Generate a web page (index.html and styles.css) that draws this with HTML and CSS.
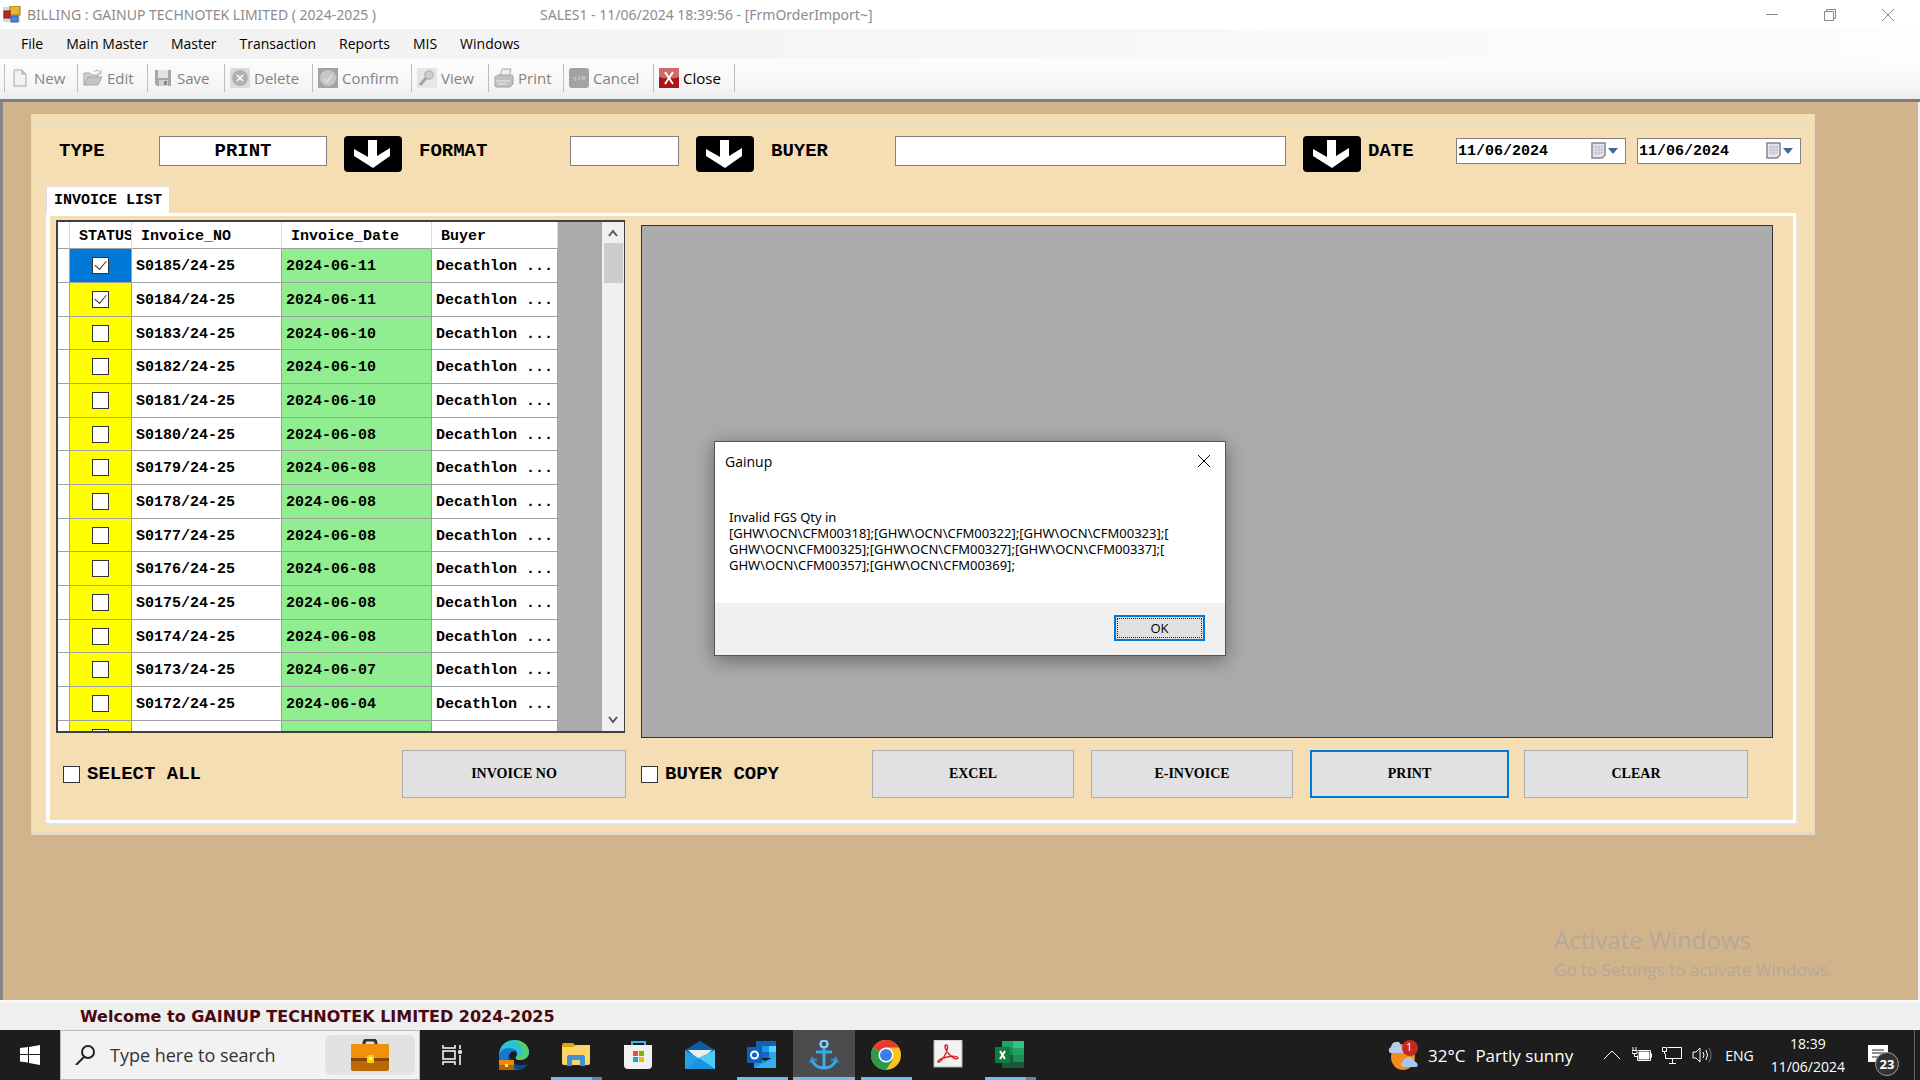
FILE: index.html
```html
<!DOCTYPE html>
<html lang="en">
  <head>
    <meta charset="UTF-8" />
    <meta name="viewport" content="width=device-width, initial-scale=1.0" />
    <title>BILLING : GAINUP TECHNOTEK LIMITED</title>
    <link rel="stylesheet" href="styles.css">
  </head>
  <body>
    <header class="titlebar">
      <svg class="app-icon" viewBox="0 0 18 18">
        <rect x="0" y="1" width="17" height="15" fill="#d8d8d8" />
        <rect x="7" y="0" width="10" height="9" fill="#e9b52b" stroke="#9a7420" />
        <rect x="1" y="5" width="6" height="7" fill="#c62a1c" stroke="#7c1a12" />
        <rect x="8" y="10" width="7" height="6" fill="#4d86dc" stroke="#2e5aa8" />
      </svg>
      <span class="app-name">BILLING : GAINUP TECHNOTEK LIMITED ( 2024-2025 )</span>
      <span class="app-session">SALES1 - 11/06/2024 18:39:56 - [FrmOrderImport~]</span>
      <div class="window-controls">
        <button type="button" aria-label="Minimize"><svg viewBox="0 0 12 12"><path d="M0 5.500h12" /></svg></button>
        <button type="button" aria-label="Restore"><svg viewBox="0 0 12 12"><path d="M.5 2.500h9v9h-9zM2.500 2.500v-2h9v9h-2" /></svg></button>
        <button type="button" aria-label="Close window"><svg viewBox="0 0 12 12"><path d="M0 0l12 12M12 0L0 12" /></svg></button>
      </div>
    </header>

    <nav class="menubar">
      <button type="button">File</button>
      <button type="button">Main Master</button>
      <button type="button">Master</button>
      <button type="button">Transaction</button>
      <button type="button">Reports</button>
      <button type="button">MIS</button>
      <button type="button">Windows</button>
    </nav>

    <div class="toolbar">
      <button type="button" class="tool-new" disabled>
        <svg viewBox="0 0 20 20"><path d="M4 2h8l4 4v12H4z" fill="#f2f2f2" stroke="#a8a8a8" /><path d="M12 2v4h4" fill="#ccc" stroke="#a8a8a8" /></svg>New
      </button>
      <button type="button" class="tool-edit" disabled>
        <svg viewBox="0 0 20 20"><path d="M1 17V5h6l1 2h7v3" fill="#d2d2d2" stroke="#a8a8a8" /><path d="M1 17l4-8h14l-4 8z" fill="#c4c4c4" stroke="#a8a8a8" /><path d="M11 4q4-4 6 1M18 2v4h-4" fill="none" stroke="#b0b0b0" /></svg>Edit
      </button>
      <button type="button" class="tool-save" disabled>
        <svg viewBox="0 0 20 20"><path d="M2 2h16v16H4l-2-2z" fill="#a6a6a6" /><rect x="5" y="2" width="10" height="8" fill="#e2e2e2" /><rect x="6" y="12" width="9" height="6" fill="#d0d0d0" /><rect x="11" y="13" width="3" height="4" fill="#888" /></svg>Save
      </button>
      <button type="button" class="tool-delete" disabled>
        <svg viewBox="0 0 20 20"><rect width="20" height="20" rx="2" fill="#dadada" /><circle cx="10" cy="10" r="8" fill="#b0b0b0" /><path d="M7 7l6 6M13 7l-6 6" stroke="#fff" stroke-width="1.500" /></svg>Delete
      </button>
      <button type="button" class="tool-confirm" disabled>
        <svg viewBox="0 0 20 20"><rect width="20" height="20" fill="#a3a3a3" /><circle cx="10" cy="10" r="8" fill="#c6c6c6" /><path d="M6 11l3 3 5-7" fill="none" stroke="#dedede" stroke-width="1.500" /></svg>Confirm
      </button>
      <button type="button" class="tool-view" disabled>
        <svg viewBox="0 0 20 20"><rect width="20" height="20" fill="#e6e6e6" /><circle cx="12" cy="7" r="4" fill="#d0d0d0" stroke="#bdbdbd" stroke-width="2" /><path d="M9 10l-6 7" stroke="#a4a4a4" stroke-width="3" /></svg>View
      </button>
      <button type="button" class="tool-print" disabled>
        <svg viewBox="0 0 20 20"><path d="M6 9l2-8h9l-2 8z" fill="#efefef" stroke="#a8a8a8" /><path d="M1 9l3-2h14l1 2v7l-3 3H2l-1-1z" fill="#c0c0c0" stroke="#a2a2a2" /><path d="M2 13h14M4 16h9" stroke="#eee" /></svg>Print
      </button>
      <button type="button" class="tool-cancel" disabled>
        <svg viewBox="0 0 20 20"><rect width="20" height="20" rx="3" fill="#a2a2a2" /><path d="M4 10h3M5 12h3M10 8v4M13 9h3v2h-3z" stroke="#d4d4d4" fill="none" /></svg>Cancel
      </button>
      <button type="button" class="tool-close">
        <svg viewBox="0 0 20 20"><rect width="20" height="20" fill="#a81616" /><path d="M0 0h20v9q-10 3-20 0z" fill="#cf6a6a" /><path d="M6 4l8 12M14 4L6 16" stroke="#fff" stroke-width="2" /></svg>Close
      </button>
    </div>

    <main class="workspace">
      <section class="order-panel">
        <form class="filters">
          <label class="label-type" for="type">TYPE</label>
          <input class="input-type" id="type" type="text" value="PRINT">
          <button type="button" class="drop-btn" aria-label="Pick type"><svg viewBox="0 0 58 36"><path d="M24 4h9v16l13-8v8L29 32 10 20v-7l14 8z" /></svg></button>
          <label class="label-format" for="format">FORMAT</label>
          <input class="input-format" id="format" type="text">
          <button type="button" class="drop-btn" aria-label="Pick format"><svg viewBox="0 0 58 36"><path d="M24 4h9v16l13-8v8L29 32 10 20v-7l14 8z" /></svg></button>
          <label class="label-buyer" for="buyer">BUYER</label>
          <input class="input-buyer" id="buyer" type="text">
          <button type="button" class="drop-btn" aria-label="Pick buyer"><svg viewBox="0 0 58 36"><path d="M24 4h9v16l13-8v8L29 32 10 20v-7l14 8z" /></svg></button>
          <label class="label-date" for="date-from">DATE</label>
          <div class="date-box">
            <input id="date-from" type="text" value="11/06/2024">
            <button type="button" aria-label="Open calendar"><svg viewBox="0 0 28 18"><path d="M1 1h13v12l-3 3H1z" fill="#e4e7ec" stroke="#8d8580" stroke-width="1.500" /><path d="M3 5h9M3 8h9M3 11h9M5 3v10M8 3v10M11 3v8" stroke="#b9c3d4" /><path d="M17 6h10l-5 6z" fill="#44649c" /></svg></button>
          </div>
          <div class="date-box">
            <input id="date-to" type="text" value="11/06/2024" aria-label="Date to">
            <button type="button" aria-label="Open calendar"><svg viewBox="0 0 28 18"><path d="M1 1h13v12l-3 3H1z" fill="#e4e7ec" stroke="#8d8580" stroke-width="1.500" /><path d="M3 5h9M3 8h9M3 11h9M5 3v10M8 3v10M11 3v8" stroke="#b9c3d4" /><path d="M17 6h10l-5 6z" fill="#44649c" /></svg></button>
          </div>
        </form>

        <button type="button" class="tab">INVOICE LIST</button>
        <div class="tab-page">
          <div class="grids">
            <div class="invoice-grid">
              <table>
                <thead>
                  <tr><th class="col-head"></th><th class="col-status">STATUS</th><th class="col-no">Invoice_NO</th><th class="col-date">Invoice_Date</th><th class="col-buyer">Buyer</th></tr>
                </thead>
                <tbody>
                  <tr class="current"><td></td><td><input type="checkbox" aria-label="S0185" checked></td><td>S0185/24-25</td><td>2024-06-11</td><td>Decathlon ...</td></tr>
                  <tr><td></td><td><input type="checkbox" aria-label="S0184" checked></td><td>S0184/24-25</td><td>2024-06-11</td><td>Decathlon ...</td></tr>
                  <tr><td></td><td><input type="checkbox" aria-label="S0183"></td><td>S0183/24-25</td><td>2024-06-10</td><td>Decathlon ...</td></tr>
                  <tr><td></td><td><input type="checkbox" aria-label="S0182"></td><td>S0182/24-25</td><td>2024-06-10</td><td>Decathlon ...</td></tr>
                  <tr><td></td><td><input type="checkbox" aria-label="S0181"></td><td>S0181/24-25</td><td>2024-06-10</td><td>Decathlon ...</td></tr>
                  <tr><td></td><td><input type="checkbox" aria-label="S0180"></td><td>S0180/24-25</td><td>2024-06-08</td><td>Decathlon ...</td></tr>
                  <tr><td></td><td><input type="checkbox" aria-label="S0179"></td><td>S0179/24-25</td><td>2024-06-08</td><td>Decathlon ...</td></tr>
                  <tr><td></td><td><input type="checkbox" aria-label="S0178"></td><td>S0178/24-25</td><td>2024-06-08</td><td>Decathlon ...</td></tr>
                  <tr><td></td><td><input type="checkbox" aria-label="S0177"></td><td>S0177/24-25</td><td>2024-06-08</td><td>Decathlon ...</td></tr>
                  <tr><td></td><td><input type="checkbox" aria-label="S0176"></td><td>S0176/24-25</td><td>2024-06-08</td><td>Decathlon ...</td></tr>
                  <tr><td></td><td><input type="checkbox" aria-label="S0175"></td><td>S0175/24-25</td><td>2024-06-08</td><td>Decathlon ...</td></tr>
                  <tr><td></td><td><input type="checkbox" aria-label="S0174"></td><td>S0174/24-25</td><td>2024-06-08</td><td>Decathlon ...</td></tr>
                  <tr><td></td><td><input type="checkbox" aria-label="S0173"></td><td>S0173/24-25</td><td>2024-06-07</td><td>Decathlon ...</td></tr>
                  <tr><td></td><td><input type="checkbox" aria-label="S0172"></td><td>S0172/24-25</td><td>2024-06-04</td><td>Decathlon ...</td></tr>
                  <tr><td></td><td><input type="checkbox" aria-label="Next invoice"></td><td></td><td></td><td></td></tr>
                </tbody>
              </table>
              <div class="scrollbar">
                <svg viewBox="0 0 12 12"><path d="M2 9l4-5 4 5" /></svg>
                <div class="scroll-thumb"></div>
                <svg viewBox="0 0 12 12"><path d="M2 3l4 5 4-5" /></svg>
              </div>
            </div>
            <div class="detail-grid"></div>
          </div>

          <div class="actions">
            <label class="check-select"><input type="checkbox">SELECT ALL</label>
            <button type="button" class="btn-invoice">INVOICE NO</button>
            <label class="check-copy"><input type="checkbox">BUYER COPY</label>
            <button type="button" class="btn-excel">EXCEL</button>
            <button type="button" class="btn-einvoice">E-INVOICE</button>
            <button type="button" class="btn-print">PRINT</button>
            <button type="button" class="btn-clear">CLEAR</button>
          </div>
        </div>
      </section>

      <div class="watermark">
        <p class="watermark-title">Activate Windows</p>
        <p class="watermark-text">Go to Settings to activate Windows.</p>
      </div>
    </main>

    <div class="statusbar">Welcome to GAINUP TECHNOTEK LIMITED 2024-2025</div>

    <footer class="taskbar">
      <button type="button" class="start" aria-label="Start">
        <svg viewBox="0 0 20 20"><path d="M0 3l8-1v7H0zM9 2l11-2v9H9zM0 10h8v7.500L0 16.500zM9 10h11v10L9 18z" fill="#fff" /></svg>
      </button>
      <div class="search">
        <svg class="search-icon" viewBox="0 0 20 20"><circle cx="13" cy="7" r="6" /><path d="M9 12l-8 8" /></svg>
        <input type="text" aria-label="Search" placeholder="Type here to search">
        <div class="search-tile">
          <svg viewBox="0 0 38 32">
            <path d="M13 6V4q0-3 3-3h6q3 0 3 3v2" fill="none" stroke="#333" stroke-width="3" />
            <rect y="5" width="38" height="27" rx="2" fill="#b86a06" /><path d="M0 19V7q0-2 2-2h34q2 0 2 2v12z" fill="#f09208" /><path d="M0 19h38v3H0z" fill="#854400" />
            <rect x="16" y="16" width="7" height="8" rx="1" fill="#f7cf13" /><rect x="18" y="18" width="3" height="3" fill="#fff29a" />
          </svg>
        </div>
      </div>
      <div class="task-icons">
        <button type="button" class="task" aria-label="Task view">
          <svg class="task-view" viewBox="0 0 20 20" fill="none" stroke="#fff" stroke-width="1.500"><path d="M1 0v3h12V0M1 20v-3h12v3M1 6h12v8H1zM18 0v4M18 10v10" /><rect x="17" y="6" width="2" height="2" /></svg>
        </button>
        <button type="button" class="task" aria-label="Edge">
          <svg viewBox="0 0 30 30">
            <path d="M0 14C1 5 7 0 15 0c9 0 15 6 15 12 0 5-4 8-9 8-3 0-5-1-4-3 2-3 1-8-5-8C6 9 1 12 0 17z" fill="#2cc3d0" /><path d="M15 0c9 0 15 6 15 12 0 5-4 8-9 8-3 0-5-1-4-3 3-1 7-1 7-5 0-5-4-9-9-12z" fill="#52cf6a" />
            <path d="M0 15c1-4 5-7 10-7 3 0 6 1 7 3-6 0-8 4-7 8 1 5 6 8 11 8 2 0 5-1 7-2-3 3-7 5-12 5C6 30-1 24 0 15z" fill="#1676d0" /><path d="M9 18c0 7 5 12 11 12 4-1 7-3 8-6-7 3-15 1-17-7z" fill="#0b4a94" />
            <rect y="20" width="15" height="10" fill="#b56200" /><path d="M0 20h15v5H0z" fill="#ea8a0c" /><rect x="6" y="24" width="3" height="3" fill="#ffe34d" />
          </svg>
        </button>
        <button type="button" class="task open stacked" aria-label="File Explorer">
          <svg viewBox="0 0 30 30"><path d="M1 5q0-2 2-2h9l3 3v5H1z" fill="#e0a30c" /><path d="M1 7h11l3-2h14v18q0 2-2 2H3q-2 0-2-2z" fill="#ffd467" /><path d="M6 26V17q0-2 2-2h14q2 0 2 2v9h-5v-6h-8v6z" fill="#3b92d8" /></svg>
        </button>
        <button type="button" class="task" aria-label="Store">
          <svg viewBox="0 0 30 30"><path d="M9 7V2h13v5" fill="none" stroke="#35b6f2" stroke-width="2" /><path d="M1 5h28v20q0 4-4 4H5q-4 0-4-4z" fill="#f1f1f1" /><path d="M10 11h5v5h-5z" fill="#f0502c" /><path d="M16 11h5v5h-5z" fill="#7db700" /><path d="M10 17h5v5h-5z" fill="#1ba1e8" /><path d="M16 17h5v5h-5z" fill="#fcb400" /></svg>
        </button>
        <button type="button" class="task" aria-label="Mail">
          <svg viewBox="0 0 30 30"><path d="M0 10L15 1l15 9v10H0z" fill="#0c5ba6" /><path d="M3 10h24L15 21z" fill="#eee" /><path d="M0 10l15 9 15-9v19H0z" fill="#25a1e8" /><path d="M30 10v19L13 18z" fill="#4acbf8" /><path d="M0 29l14-11 16 11z" fill="#1d93dc" /></svg>
        </button>
        <button type="button" class="task open" aria-label="Outlook">
          <svg viewBox="0 0 30 30"><path d="M9 1h20v15H9z" fill="#0f62b5" /><path d="M15 6h7v6h-7z" fill="#2394e0" /><path d="M22 6h7v6h-7z" fill="#50d9ff" /><path d="M15 12h7v6h-7z" fill="#0f6cc4" /><path d="M22 12h7v6h-7z" fill="#28a8ea" /><path d="M7 15l11 6 11-5v12H7z" fill="#1893e0" /><path d="M7 28l22-12v12z" fill="#33afee" /><rect y="7" width="15" height="16" rx="1" fill="#0d5fc0" /><circle cx="7.500" cy="15" r="3.500" fill="none" stroke="#fff" stroke-width="2" /></svg>
        </button>
        <button type="button" class="task open active" aria-label="Billing">
          <svg viewBox="0 0 30 30" fill="none" stroke="#3ea9ec" stroke-width="3"><circle cx="15" cy="4" r="3.500" stroke="#7fd0fa" stroke-width="2.500" /><path d="M15 8v20M7 12h16" /><path d="M3 20q3 8 12 8t12-8" /><path d="M1 23l2-5 5 3M29 23l-2-5-5 3" stroke-width="2" stroke="#2d8fe0" /></svg>
        </button>
        <button type="button" class="task open" aria-label="Chrome">
          <svg viewBox="0 0 30 30"><circle cx="15" cy="15" r="15" fill="#fcc31e" /><path d="M15 15L2 7.500A15 15 0 0 1 28 7.500H15z" fill="#e33b2e" /><path d="M2 7.500a15 15 0 0 0 13 22.500l7-11-7-4z" fill="#2c9a48" /><circle cx="15" cy="15" r="7.500" fill="#fff" /><circle cx="15" cy="15" r="6" fill="#3b7ded" /></svg>
        </button>
        <button type="button" class="task" aria-label="Acrobat">
          <svg viewBox="0 0 30 30"><rect x="1" width="28" height="27" fill="#f2f2f2" stroke="#b5b5b5" /><path d="M5 22c3 1 6-5 8-9 2-5 2-8 0-8s-1 5 3 9c3 4 8 6 9 4 0-2-6-2-11-1-5 1-9 3-9 5z" fill="none" stroke="#e0242b" stroke-width="1.500" /></svg>
        </button>
        <button type="button" class="task open stacked" aria-label="Excel">
          <svg viewBox="0 0 30 30"><rect x="7" y="1" width="22" height="27" rx="1" fill="#1f8a52" /><path d="M18 1h11v7H18z" fill="#33c481" /><path d="M7 1h11v7H7z" fill="#21a366" /><path d="M18 8h11v7H18z" fill="#21a366" /><path d="M7 15h11v7H7zM7 22h22v6H7z" fill="#185c37" /><rect y="7" width="15" height="16" rx="1" fill="#107c41" /><path d="M5 11l5 8M10 11l-5 8" stroke="#fff" stroke-width="2" /></svg>
        </button>
      </div>
      <div class="tray">
        <div class="weather">
          <svg viewBox="0 0 30 30"><ellipse cx="15" cy="17" rx="12" ry="13" fill="#f58a1d" /><path d="M2 13q-3-4 1-6 1-5 5-5 4-1 5 4 4 1 2 7z" fill="#b5cdf3" /><path d="M15 27q-4-3 0-6 2-4 6-4 4 0 5 4 5 2 3 6z" fill="#a8c5f2" /><circle cx="22" cy="8" r="8" fill="#c42b1c" /></svg>
          <span class="weather-badge">1</span>
          <span>32°C</span><span>Partly sunny</span>
        </div>
        <svg class="tray-icon" viewBox="0 0 20 20"><path d="M2 14l8-8 8 8" /></svg>
        <svg class="tray-icon" viewBox="0 0 20 20"><path d="M6 5.500h12.500v10H5.500v-5M19.500 8.500v4M0 5.500h5v3H0zM1 2v3M4 2v3M2.500 8v3.500h3" /><path d="M7 7h10v7H7z" fill="#fff" /></svg>
        <svg class="tray-icon" viewBox="0 0 20 20"><path d="M5.500 2.500h14v11h-16V9M10.500 14v4M7 18.500h7M.5 2.500h4v4h-4zM2.500 6v3" /></svg>
        <svg class="tray-icon" viewBox="0 0 20 20"><path d="M1 7h3l4-4v14l-4-4H1zM11 7q2 3 0 6M14 5q3 5 0 10" /><path d="M17 3q4 7 0 14" stroke="#777" /></svg>
        <span class="lang">ENG</span>
        <div class="clock"><span>18:39</span><span>11/06/2024</span></div>
        <div class="notify">
          <svg viewBox="0 0 20 20"><path d="M0 0h20v17h-7l-3 3-3-3H0z" fill="#fff" /><path d="M4 5h12M4 8h12M4 12h8" stroke="#222" /></svg>
          <span class="notify-count">23</span>
        </div>
      </div>
    </footer>

    <div class="dialog" role="dialog" aria-labelledby="dialog-title">
      <div class="dialog-head">
        <span id="dialog-title">Gainup</span>
        <button type="button" class="dialog-close" aria-label="Close dialog"><svg viewBox="0 0 12 12"><path d="M0 0l12 12M12 0L0 12" /></svg></button>
      </div>
      <p class="dialog-text">Invalid FGS Qty in<br>[GHW\OCN\CFM00318];[GHW\OCN\CFM00322];[GHW\OCN\CFM00323];[<br>GHW\OCN\CFM00325];[GHW\OCN\CFM00327];[GHW\OCN\CFM00337];[<br>GHW\OCN\CFM00357];[GHW\OCN\CFM00369];</p>
      <div class="dialog-foot">
        <button type="button" class="dialog-ok"><span>OK</span></button>
      </div>
    </div>
  </body>
</html>
```

FILE: styles.css
```css
* {
  box-sizing: border-box;
}

body {
  margin: 0;
  min-height: 100vh;
  display: flex;
  flex-direction: column;
  font-family: "Open Sans", "Noto Sans", sans-serif;
  font-size: 14px;
  color: #000;
}

button,
input {
  font: inherit;
  color: inherit;
  margin: 0;
}

button {
  padding: 0;
  border: none;
  background: none;
}

svg {
  display: block;
  flex: none;
}

/* title bar */
.titlebar {
  display: flex;
  align-items: center;
  height: 29px;
  padding-left: 3px;
  padding-right: 3px;
  background: #fff;
  color: #8c8c8c;
  font-family: "Noto Sans", sans-serif;
}

.app-icon {
  width: 18px;
  height: 18px;
}

.app-name {
  width: 513px;
  margin-left: 6px;
  white-space: nowrap;
}

.window-controls {
  display: flex;
  margin-left: auto;
}

.window-controls button {
  width: 58px;
  height: 28px;
  display: flex;
  align-items: center;
  justify-content: center;
}

.window-controls svg {
  width: 12px;
  height: 12px;
  fill: none;
  stroke: #888;
}

/* menu and toolbar */
.menubar {
  display: flex;
  gap: 23px;
  height: 30px;
  padding-left: 21px;
  padding-bottom: 2px;
  background: linear-gradient(to right, #f0f0f0, #fdfdfd);
}

.toolbar {
  display: flex;
  align-items: center;
  height: 43px;
  padding-left: 4px;
  padding-bottom: 2px;
  background: linear-gradient(#fdfdfd, #f5f5f5 70%, #ebebeb);
  border-bottom: 3px solid #7d7d7d;
  font-size: 15px;
}

.toolbar button {
  display: flex;
  align-items: center;
  gap: 4px;
  height: 28px;
  padding-left: 5px;
  border-left: 1px solid #bdbdbd;
  white-space: nowrap;
}

.toolbar button:disabled {
  color: #838383;
}

.toolbar svg {
  width: 20px;
  height: 20px;
}

.tool-new {
  width: 73px;
}

.tool-edit {
  width: 70px;
}

.tool-save,
.tool-view {
  width: 77px;
}

.tool-print {
  width: 75px;
}

.tool-delete {
  width: 88px;
}

.tool-confirm {
  width: 99px;
}

.tool-cancel {
  width: 90px;
}

.toolbar .tool-close {
  width: 82px;
  border-right: 1px solid #bdbdbd;
}

/* workspace */
.workspace {
  flex: 1;
  display: flex;
  flex-direction: column;
  padding: 12px 103px 17px 28px;
  background: #d2b48c;
  border-left: 3px solid #858585;
  border-right: 2px solid #f2f2f2;
}

.order-panel {
  padding: 8px 0 0;
  background: #f5deb3;
  border: 1px solid #e6dac4;
  border-bottom-width: 3px;
  border-top: none;
  font-family: "Liberation Mono", "Courier New", monospace;
  font-weight: bold;
}

.filters {
  display: flex;
  align-items: center;
  height: 64px;
  padding: 0 13px 7px 27px;
  border-top: 1px solid #e3dccd;
  font-size: 19px;
}

.filters > input {
  height: 30px;
  border: 1px solid #828282;
  background: #fff;
}

.input-type {
  width: 168px;
  text-align: center;
}

.input-format {
  width: 109px;
}

.input-buyer {
  flex: 1;
  min-width: 100px;
}

.label-type {
  width: 100px;
}

.label-format {
  width: 151px;
}

.label-buyer {
  width: 124px;
}

.label-date {
  width: 88px;
}

.drop-btn {
  width: 58px;
  height: 36px;
  margin: 6px 17px 0;
  border-radius: 4px;
  background: #000;
}

.drop-btn svg {
  fill: #fff;
}

.input-buyer + .drop-btn {
  margin-right: 7px;
}

.date-box {
  display: flex;
  align-items: center;
  width: 170px;
  height: 26px;
  padding-right: 6px;
  border: 1px solid #828282;
  background: #fff;
  font-size: 15px;
}

.date-box + .date-box {
  width: 164px;
  margin-left: 11px;
}

.date-box input {
  flex: 1;
  min-width: 0;
  border: none;
  padding: 0 1px;
}

.date-box svg {
  width: 28px;
  height: 18px;
}

.tab {
  display: block;
  width: 124px;
  height: 27px;
  margin-left: 14px;
  border: 1px solid #e0e0e0;
  border-bottom: none;
  background: #fff;
  font-size: 15px;
}

.tab-page {
  margin: 0 18px 9px 14px;
  padding: 4px 20px 22px 6px;
  border: 3px solid #fff;
  border-left-width: 4px;
  box-shadow: 2px 2px 0 #e3e3e3;
}

.grids {
  display: flex;
  gap: 16px;
}

.invoice-grid {
  display: flex;
  justify-content: space-between;
  width: 569px;
  height: 513px;
  overflow: hidden;
  border: 2px solid #404040;
  border-right-width: 1px;
  background: #ababab;
}

.detail-grid {
  flex: 1;
  height: 513px;
  margin-top: 5px;
  border: 1px solid #333;
  background: #ababab;
}

.invoice-grid table {
  table-layout: fixed;
  width: 500px;
  height: 0;
  border-collapse: separate;
  border-spacing: 0;
  background: #fff;
  font-size: 15px;
}

.invoice-grid th {
  height: 27px;
  padding: 2px 9px 0;
  border-right: 1px solid #dcdcdc;
  border-bottom: 1px solid #a0a0a0;
  text-align: left;
  white-space: nowrap;
  overflow: hidden;
}

.col-head {
  width: 12px;
}

.col-status {
  width: 62px;
}

.col-no,
.col-date {
  width: 150px;
}

.col-buyer {
  width: 126px;
}

.invoice-grid td {
  height: 34px;
  padding: 2px 4px 0;
  border-right: 1px solid #a0a0a0;
  border-bottom: 1px solid #a0a0a0;
  white-space: nowrap;
  overflow: hidden;
}

/* two 34px rows, then one 33px row */
.invoice-grid tr:nth-child(3n) td {
  height: 33px;
}

.invoice-grid th:first-child,
.invoice-grid th:nth-child(2),
.invoice-grid td:first-child {
  padding-right: 0;
}

.invoice-grid td:nth-child(2) {
  padding-top: 0;
  background: #ff0;
  text-align: center;
}

.invoice-grid .current td:nth-child(2) {
  background: #0078d7;
}

.invoice-grid td:nth-child(4) {
  background: #90ee90;
}

input[type="checkbox"] {
  appearance: none;
  flex: none;
  width: 17px;
  height: 17px;
  border: 1px solid #333;
  background: #fff;
}

td input[type="checkbox"] {
  display: block;
  margin: 0 auto;
}

input[type="checkbox"]:checked::before {
  content: "";
  display: block;
  width: 6px;
  height: 10px;
  margin: 0 auto;
  border: solid #333;
  border-width: 0 1px 1px 0;
  transform: rotate(40deg);
}

.scrollbar {
  display: flex;
  flex-direction: column;
  align-items: center;
  width: 22px;
  padding: 5px 0;
  background: #f0f0f0;
}

.scrollbar svg {
  width: 12px;
  height: 12px;
  fill: none;
  stroke: #555;
  stroke-width: 2;
}

.scroll-thumb {
  width: 19px;
  height: 40px;
  margin: 4px 0 auto;
  background: #cdcdcd;
}

.actions {
  display: flex;
  align-items: center;
  padding-top: 12px;
}

.actions label {
  display: flex;
  align-items: center;
  gap: 7px;
  font-size: 19px;
  white-space: nowrap;
}

.check-select {
  width: 346px;
  padding-left: 7px;
}

.check-copy {
  width: 231px;
  margin-left: 15px;
}

.actions button {
  height: 48px;
  border: 1px solid #adadad;
  background: #e1e1e1;
  font-family: "Liberation Serif", "Times New Roman", serif;
  font-size: 14px;
}

.btn-invoice,
.btn-clear {
  width: 224px;
}

.btn-excel,
.btn-einvoice {
  width: 202px;
  margin-right: 17px;
}

.actions .btn-print {
  width: 199px;
  margin-right: 15px;
  border: 2px solid #0078d7;
}

.watermark {
  width: 285px;
  margin-top: auto;
  margin-left: auto;
  margin-right: -24px;
  color: #b5a898;
  white-space: nowrap;
}

.watermark p {
  margin: 0;
}

.watermark-title {
  font-size: 24px;
  line-height: 34px;
}

.watermark-text {
  font-size: 17px;
  line-height: 26px;
}

.statusbar {
  height: 30px;
  padding-left: 80px;
  border-top: 3px solid #f8f8f8;
  background: #efefef;
  color: #4a0810;
  font-family: "DejaVu Sans", sans-serif;
  font-size: 16px;
  font-weight: bold;
  line-height: 28px;
}

/* taskbar */
.taskbar {
  display: flex;
  height: 50px;
  background: #1d1d1d;
  color: #fff;
}

.start {
  width: 60px;
  padding-left: 20px;
}

.start svg {
  width: 20px;
  height: 20px;
}

.search {
  display: flex;
  align-items: center;
  width: 360px;
  padding: 0 4px 0 14px;
  border: 1px solid #bbb;
  background: #f2f2f2;
  color: #222;
  font-size: 18px;
}

.search-icon {
  width: 20px;
  height: 20px;
  fill: none;
  stroke: #222;
  stroke-width: 2;
}

.search input {
  flex: 1;
  min-width: 0;
  padding: 0 0 0 15px;
  border: none;
  background: none;
}

.search input::placeholder {
  color: #333;
}

.search-tile {
  display: flex;
  align-items: center;
  justify-content: center;
  width: 90px;
  height: 40px;
  border-radius: 6px;
  background: #e2e2e2;
}

.search-tile svg {
  width: 38px;
  height: 32px;
}

.task-icons {
  display: flex;
  padding-left: 1px;
}

.task {
  display: flex;
  align-items: center;
  justify-content: center;
  width: 62px;
  border: solid transparent;
  border-width: 3px 0;
}

.task svg {
  width: 30px;
  height: 30px;
}

.task .task-view {
  width: 20px;
  height: 20px;
}

.open {
  background: linear-gradient(#76b9ed, #76b9ed) bottom / 51px 3px no-repeat border-box;
}

.stacked {
  background: linear-gradient(to right, #76b9ed 41px, #5688b4 41px) bottom / 51px 3px no-repeat border-box;
}

.active {
  background: #4b4b4d;
  border-bottom-color: #76b9ed;
}

.tray {
  display: flex;
  align-items: center;
  gap: 10px;
  margin-left: auto;
  margin-right: 5px;
  padding-right: 26px;
  border-right: 1px solid #666;
  font-size: 14px;
}

.weather {
  position: relative;
  display: flex;
  align-items: center;
  gap: 10px;
  margin-right: 19px;
  font-size: 17px;
}

.weather svg {
  width: 30px;
  height: 30px;
}

.weather-badge {
  position: absolute;
  left: 18px;
  top: 0;
  font-size: 11px;
  line-height: 14px;
}

.tray-icon {
  width: 20px;
  height: 20px;
  fill: none;
  stroke: #fff;
}

.lang {
  margin-left: 3px;
}

.clock {
  display: flex;
  flex-direction: column;
  align-items: center;
  margin: 0 13px 0 7px;
  line-height: 23px;
}

.notify {
  position: relative;
}

.notify svg {
  width: 20px;
  height: 20px;
}

.notify-count {
  position: absolute;
  left: 7px;
  top: 7px;
  width: 24px;
  height: 24px;
  border: 1px solid #999;
  border-radius: 50%;
  background: #333;
  font-size: 13px;
  font-weight: bold;
  line-height: 22px;
  text-align: center;
}

/* message box */
.dialog {
  position: absolute;
  left: 714px;
  top: 441px;
  width: 512px;
  border: 1px solid #555;
  background: #fff;
  box-shadow: 0 4px 18px rgba(0, 0, 0, 0.4);
}

.dialog-head {
  display: flex;
  align-items: center;
  justify-content: space-between;
  height: 38px;
  padding: 0 15px 0 10px;
}

.dialog-close svg {
  width: 12px;
  height: 12px;
  stroke: #000;
}

.dialog-text {
  margin: 0;
  padding: 29px 14px 30px;
  font-family: "Noto Sans", sans-serif;
  font-size: 13px;
  line-height: 16px;
  white-space: nowrap;
}

.dialog-foot {
  display: flex;
  justify-content: flex-end;
  padding: 12px 20px 14px;
  background: #f0f0f0;
}

.dialog-ok {
  width: 91px;
  height: 26px;
  padding: 1px;
  border: 2px solid #0078d7;
  background: #e1e1e1;
  font-size: 13px;
}

.dialog-ok span {
  display: block;
  border: 1px dotted #222;
  line-height: 18px;
}
```
